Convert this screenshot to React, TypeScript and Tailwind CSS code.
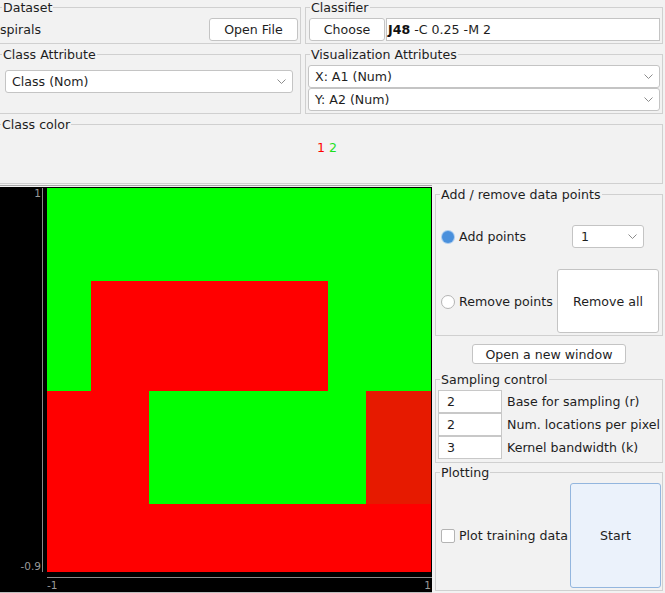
import React from 'react';

const Chevron = () => (
  <svg width="9" height="5" viewBox="0 0 9 5" className="shrink-0">
    <path d="M0.5 0.5L4.5 4.5L8.5 0.5" fill="none" stroke="#8c8c8c" strokeWidth="1" />
  </svg>
);

const Combo = ({ label, className = '' }: { label: string; className?: string }) => (
  <div className={`flex items-center justify-between h-[23px] bg-white border border-[#c4c4c4] rounded-[3px] pl-[6px] pr-[6px] ${className}`}>
    <span>{label}</span>
    <Chevron />
  </div>
);

const Group = ({
  title,
  className = '',
  legendClass = 'ml-[4px]',
  children,
}: {
  title: string;
  className?: string;
  legendClass?: string;
  children?: React.ReactNode;
}) => (
  <fieldset className={`border border-[#d0d0d0] ${className}`}>
    <legend className={`leading-[15px] px-[1px] ${legendClass}`}>{title}</legend>
    {children}
  </fieldset>
);

const Radio = ({ checked }: { checked?: boolean }) =>
  checked ? (
    <svg width="16" height="16" viewBox="0 0 16 16" className="shrink-0">
      <circle cx="8" cy="8" r="7" fill="#a9cbf0" />
      <circle cx="8" cy="8" r="6" fill="#4a90dc" />
    </svg>
  ) : (
    <svg width="16" height="16" viewBox="0 0 16 16" className="shrink-0">
      <circle cx="8" cy="8" r="6.5" fill="#fff" stroke="#b4b4b4" />
    </svg>
  );

const Btn = ({ children, className = '' }: { children: React.ReactNode; className?: string }) => (
  <div className={`flex items-center justify-center bg-white border border-[#c4c4c4] rounded-[3px] ${className}`}>{children}</div>
);

export default function App() {
  return (
    <div className="w-[665px] h-[593px] overflow-hidden bg-[#f2f2f2] text-[#1e1e1e] text-[12.6px] leading-[15px] font-['DejaVu_Sans',sans-serif] flex flex-col">
      {/* top row */}
      <div className="flex gap-[4px] pr-[2px]">
        <Group title="Dataset" className="w-[301px] h-[44px] border-l-0" legendClass="ml-[2px]">
          <div className="flex items-center justify-between pt-[3px] pr-[2px]">
            <span>spirals</span>
            <Btn className="w-[89px] h-[23px]">Open File</Btn>
          </div>
        </Group>
        <Group title="Classifier" className="flex-1 h-[44px]">
          <div className="flex gap-[1px] pt-[3px] pl-[3px] pr-[2px]">
            <Btn className="w-[76px] h-[23px]">Choose</Btn>
            <div className="flex-1 h-[23px] bg-white border border-[#c4c4c4] pl-[1px] flex items-center">
              <span className="font-bold text-[#111]">J48</span>
              <span>&nbsp;-C 0.25 -M 2</span>
            </div>
          </div>
        </Group>
      </div>

      {/* second row */}
      <div className="flex gap-[4px] pr-[2px] mt-[3px]">
        <Group title="Class Attribute" className="w-[301px] h-[67px] border-l-0" legendClass="ml-[2px]">
          <div className="pt-[8px] pl-[5px] pr-[7px]">
            <Combo label="Class (Nom)" />
          </div>
        </Group>
        <Group title="Visualization Attributes" className="flex-1 h-[67px]">
          <div className="flex flex-col pt-[3px] pl-[2px] pr-[2px]">
            <Combo label="X: A1 (Num)" />
            <Combo label="Y: A2 (Num)" />
          </div>
        </Group>
      </div>

      {/* class color */}
      <div className="pr-[2px] mt-[3px]">
        <Group title="Class color" className="h-[67px] border-l-0" legendClass="ml-[1px]">
          <div className="pt-[8px] pr-[8px] flex justify-center gap-[4px]">
            <span className="text-[#ff0000]">1</span>
            <span className="text-[#1ee01e]">2</span>
          </div>
        </Group>
      </div>

      {/* bottom */}
      <div className="flex flex-1">
        {/* plot */}
        <div className="w-[432px] flex flex-col pt-[1px]">
          <div className="h-px bg-[#a6a6a6]" />
          <div className="h-px" />
          <div className="flex-1 bg-black flex flex-col border-b border-[#bdbdbd] text-[10.5px] leading-[11px] text-[#9a9a9a]">
            <div className="flex pt-[1px]">
              <div className="w-[43px] h-[384px] border-r border-[#8a8a8a] flex flex-col justify-between items-end pr-[1px]">
                <span>1</span>
                <span>-0.9</span>
              </div>
              <svg width="384" height="384" viewBox="0 0 384 384" className="ml-[4px]" shapeRendering="crispEdges">
                <rect x="0" y="0" width="384" height="384" fill="#00ff00" />
                <rect x="44" y="93" width="237" height="110" fill="#ff0000" />
                <rect x="0" y="203" width="384" height="181" fill="#ff0000" />
                <rect x="102" y="203" width="217" height="113" fill="#00ff00" />
                <rect x="319" y="203" width="65" height="113" fill="#e61a00" />
              </svg>
            </div>
            <div className="ml-[47px] mt-[5px] h-px bg-[#8a8a8a]" />
            <div className="ml-[47px] mt-[2px] pr-[1px] flex justify-between">
              <span>-1</span>
              <span>1</span>
            </div>
          </div>
        </div>

        {/* right panel */}
        <div className="flex-1 flex flex-col pl-[3px] pr-[2px]">
          <Group title="Add / remove data points" className="h-[149px] mt-[3px]">
            <div className="grid grid-cols-[117px_102px] grid-rows-[67px_64px] pl-[4px] pr-[3px]">
              <div className="flex items-center gap-[3px] pt-[2px]">
                <Radio checked />
                <span>Add points</span>
              </div>
              <div className="flex items-center justify-center pt-[2px]">
                <Combo label="1" className="w-[72px] pl-[8px]" />
              </div>
              <div className="flex items-center gap-[3px] pt-[1px]">
                <Radio />
                <span>Remove points</span>
              </div>
              <Btn>Remove all</Btn>
            </div>
          </Group>

          <Btn className="self-center w-[154px] h-[20px] mt-[8px]">Open a new window</Btn>

          <Group title="Sampling control" className="h-[91px] mt-[8px]">
            <div className="flex flex-col pt-[3px] pl-[2px]">
              {[
                ['2', 'Base for sampling (r)'],
                ['2', 'Num. locations per pixel'],
                ['3', 'Kernel bandwidth (k)'],
              ].map(([v, l], i) => (
                <div key={i} className="flex items-center">
                  <div className="w-[64px] h-[23px] bg-white border border-[#c8c8c8] pl-[8px] flex items-center">{v}</div>
                  <span className="ml-[5px] whitespace-nowrap">{l}</span>
                </div>
              ))}
            </div>
          </Group>

          <Group title="Plotting" className="h-[126px] mt-[2px]">
            <div className="flex items-center pt-[3px] pl-[5px] pr-[1px]">
              <div className="flex items-center gap-[4px] flex-1">
                <div className="w-[14px] h-[14px] bg-white border border-[#b4b4b4] rounded-[2px]" />
                <span className="whitespace-nowrap">Plot training data</span>
              </div>
              <div className="w-[91px] h-[105px] flex items-center justify-center bg-[#ebf2fb] border border-[#93b6de] rounded-[3px]">
                Start
              </div>
            </div>
          </Group>
        </div>
      </div>
    </div>
  );
}
